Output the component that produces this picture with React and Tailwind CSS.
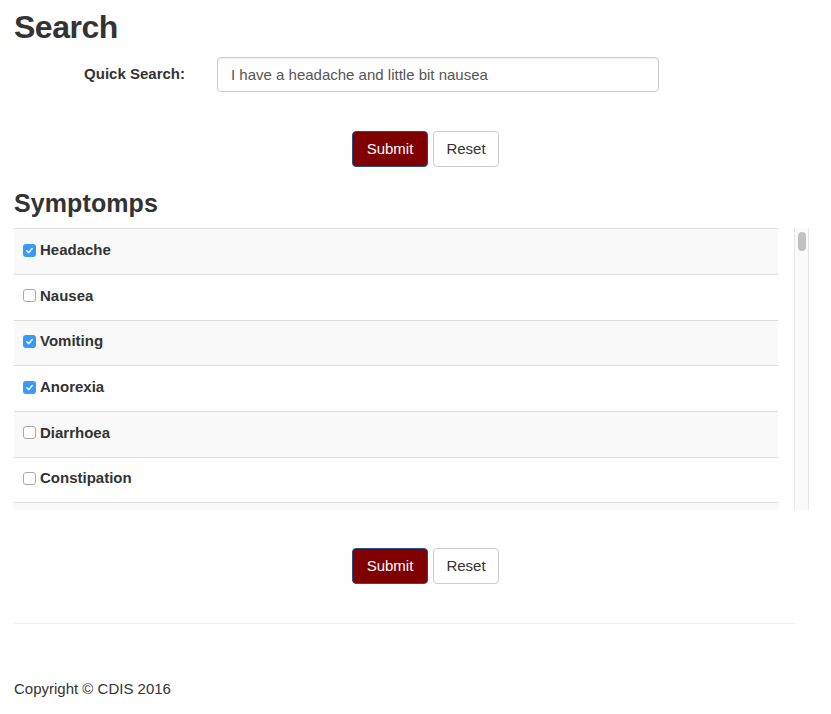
const symptoms = [
  { name: "Headache", checked: true },
  { name: "Nausea", checked: false },
  { name: "Vomiting", checked: true },
  { name: "Anorexia", checked: true },
  { name: "Diarrhoea", checked: false },
  { name: "Constipation", checked: false },
]

const CheckBox = ({ checked }) => {
  if (checked) {
    return (
      <span className="w-[13px] h-[13px] rounded-[3px] bg-[#3b99fc] flex items-center justify-center shrink-0">
        <svg width="9" height="9" viewBox="0 0 10 10">
          <path d="M2 5.2 L4.2 7.4 L8 2.8" fill="none" stroke="white" strokeWidth="1.6" strokeLinecap="round" strokeLinejoin="round" />
        </svg>
      </span>
    )
  }
  return <span className="w-[13px] h-[13px] rounded-[3px] border border-[#a9a9a9] bg-white shrink-0" />
}

const Buttons = () => (
  <div className="flex justify-center pl-[20px] gap-[5px]">
    <button className="h-[36px] w-[76px] rounded-[4px] bg-[#800000] border border-[#24508a] text-white text-[15px]">Submit</button>
    <button className="h-[36px] w-[66px] rounded-[4px] bg-white border border-[#ccc] text-[#333] text-[15px]">Reset</button>
  </div>
)

export default function App() {
  return (
    <div className="w-[831px] h-[714px] bg-white px-[14px] text-[#333] overflow-hidden" style={{ fontFamily: '"Liberation Sans", Arial, sans-serif' }}>
      <h2 className="pt-[9px] text-[32px] leading-[1.15] font-bold tracking-[-0.5px]">Search</h2>

      <div className="flex items-center mt-[11px]">
        <label className="w-[171px] text-right font-bold text-[15px]">Quick Search:</label>
        <input
          type="text"
          defaultValue="I have a headache and little bit nausea"
          className="ml-[32px] w-[442px] h-[35px] rounded-[4px] border border-[#ccc] px-[13px] text-[15px] text-[#555] shadow-[inset_0_1px_1px_rgba(0,0,0,0.075)] focus:outline-none"
        />
      </div>

      <div className="mt-[39px]">
        <Buttons />
      </div>

      <h3 className="mt-[23px] text-[25px] leading-[1.1] font-bold tracking-[0.1px]">Symptomps</h3>

      <div className="mt-[11px] h-[282px] w-[795px] flex overflow-hidden">
        <div className="w-[764px]">
          {symptoms.map((s, i) => (
            <div
              key={s.name}
              className={"h-[45.67px] border-t border-[#ddd] flex items-center pl-[9px] pb-[3px] gap-[4px] " + (i % 2 === 0 ? "bg-[#f9f9f9]" : "bg-white")}
            >
              <CheckBox checked={s.checked} />
              <span className="font-bold text-[15px]">{s.name}</span>
            </div>
          ))}
          <div className="h-[45.67px] border-t border-[#ddd] bg-[#f9f9f9]" />
        </div>
        <div className="ml-[16px] w-[15px] h-full bg-[#fafafa] border-l border-r border-[#e8e8e8] pt-[4px] flex justify-center">
          <div className="w-[8px] h-[19px] rounded-full bg-[#c1c1c1]" />
        </div>
      </div>

      <div className="mt-[38px]">
        <Buttons />
      </div>

      <hr className="mt-[39px] w-[781px] border-t border-[#eee]" />

      <p className="mt-[55px] text-[15px] leading-[20px]">Copyright © CDIS 2016</p>
    </div>
  )
}
